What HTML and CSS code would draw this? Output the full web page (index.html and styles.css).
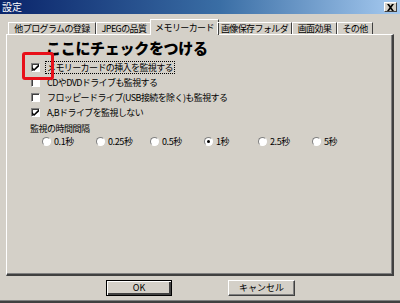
FILE: index.html
```html
<!DOCTYPE html>
<html lang="ja">
<head>
<meta charset="utf-8">
<title>設定</title>
<link rel="stylesheet" href="styles.css">
</head>
<body>
<div class="window">
  <div class="titlebar">
    <span class="title">設定</span>
    <span class="close"><svg width="9" height="7" viewBox="0 0 9 7"><path d="M1 0h2l1.5 2 1.5-2h2L5.5 3.5 8 7H6L4.5 5 3 7H1l2.5-3.5z" fill="#000"/></svg></span>
  </div>
  <div class="tabs">
    <div class="tab w1">他プログラムの登録</div>
    <div class="tab w2">JPEGの品質</div>
    <div class="tab active w3">メモリーカード</div>
    <div class="tab w4">画像保存フォルダ</div>
    <div class="tab w5">画面効果</div>
    <div class="tab w6">その他</div>
  </div>
  <div class="panel">
    <div class="checks">
      <div class="row"><span class="cb"><svg width="7" height="7" viewBox="0 0 7 7"><path d="M0 3l2 2 5-5v2.5L2 7 0 5z" fill="#000"/></svg></span><span class="lbl focus">メモリーカードの挿入を監視する</span></div>
      <div class="row"><span class="cb"></span><span class="lbl">CDやDVDドライブも監視する</span></div>
      <div class="row"><span class="cb"></span><span class="lbl">フロッピードライブ(USB接続を除く)も監視する</span></div>
      <div class="row"><span class="cb"><svg width="7" height="7" viewBox="0 0 7 7"><path d="M0 3l2 2 5-5v2.5L2 7 0 5z" fill="#000"/></svg></span><span class="lbl">A,Bドライブを監視しない</span></div>
    </div>
    <div class="group-label">監視の時間間隔</div>
    <div class="radios">
      <div class="radio"><span class="rb"></span><span>0.1秒</span></div>
      <div class="radio"><span class="rb"></span><span>0.25秒</span></div>
      <div class="radio"><span class="rb"></span><span>0.5秒</span></div>
      <div class="radio"><span class="rb on"></span><span>1秒</span></div>
      <div class="radio"><span class="rb"></span><span>2.5秒</span></div>
      <div class="radio"><span class="rb"></span><span>5秒</span></div>
    </div>
    <div class="note">ここにチェックをつける</div>
    <div class="redbox"></div>
  </div>
  <div class="buttons">
    <button class="btn default">OK</button>
    <button class="btn">キャンセル</button>
  </div>
</div>
</body>
</html>
```
FILE: styles.css
```css
html, body {
  margin: 0;
  padding: 0;
}
body {
  width: 400px;
  height: 303px;
  overflow: hidden;
  font-family: "Noto Sans CJK JP", "Liberation Sans", sans-serif;
  font-size: 9px;
  color: #000;
}
.window {
  width: 400px;
  height: 303px;
  box-sizing: border-box;
  background: #d4d0c8;
  display: flex;
  flex-direction: column;
  border-bottom: 2px solid #404040;
  box-shadow: inset 0 -1px 0 #808080;
}
.titlebar {
  height: 14px;
  flex: none;
  background: linear-gradient(to right, #0a246a, #3a6ea5 55%, #a6caf0);
  display: flex;
  align-items: center;
  justify-content: space-between;
  padding: 0 3px 0 2px;
}
.title {
  color: #fff;
  font-size: 10px;
  line-height: 12px;
}
.close {
  width: 13px;
  height: 10px;
  box-sizing: border-box;
  background: #d4d0c8;
  border: 1px solid;
  border-color: #fff #404040 #404040 #fff;
  display: flex;
  align-items: center;
  justify-content: center;
}
.tabs {
  height: 20px;
  flex: none;
  display: flex;
  align-items: flex-end;
  padding-left: 8px;
  position: relative;
  z-index: 1;
}
.tab {
  height: 12px;
  box-sizing: border-box;
  border-top: 1px solid #fff;
  border-left: 1px solid #fff;
  border-right: 1px solid #404040;
  text-align: center;
  line-height: 11px;
  white-space: nowrap;
  letter-spacing: -0.6px;
}
.tab.active {
  height: 16px;
  margin: 0 -2px -1px -2px;
  padding-top: 2px;
  background: #d4d0c8;
}
.w1 { width: 88px; }
.w2 { width: 56px; }
.w3 { width: 69px; }
.w4 { width: 75px; }
.w5 { width: 45px; }
.w6 { width: 36px; }
.panel {
  flex: none;
  height: 242px;
  margin: 0 6px;
  box-sizing: border-box;
  border-top: 1px solid #fff;
  border-left: 1px solid #fff;
  border-right: 2px solid #404040;
  border-bottom: 2px solid #404040;
  box-shadow: inset -1px -1px 0 #808080;
  position: relative;
  padding: 25px 0 0 24px;
}
.checks {
  display: flex;
  flex-direction: column;
}
.row {
  height: 15px;
  display: flex;
  align-items: center;
  gap: 3px;
}
.cb {
  width: 9px;
  height: 9px;
  box-sizing: border-box;
  background: #fff;
  border: 1px solid;
  border-color: #808080 #fff #fff #808080;
  box-shadow: inset 1px 1px 0 #404040;
  display: flex;
  align-items: center;
  justify-content: center;
  margin-right: 2px;
}
.lbl {
  line-height: 11px;
  padding: 0 1px;
  letter-spacing: -0.6px;
  white-space: nowrap;
  border: 1px dotted transparent;
}
.lbl.focus {
  border-color: #000;
}
.group-label {
  margin: 4px 0 0 -1px;
  height: 10px;
  line-height: 10px;
  letter-spacing: -0.5px;
}
.radios {
  display: flex;
  margin: 2px 0 0 11px;
  height: 11px;
  align-items: center;
}
.radio {
  width: 54px;
  display: flex;
  align-items: center;
  gap: 3px;
  letter-spacing: -0.4px;
  line-height: 11px;
}
.rb {
  width: 9px;
  height: 9px;
  box-sizing: border-box;
  border-radius: 50%;
  background: #fff;
  border: 1px solid;
  border-color: #808080 #fff #fff #808080;
  position: relative;
}
.rb.on::after {
  content: "";
  position: absolute;
  left: 2px;
  top: 2px;
  width: 3px;
  height: 3px;
  border-radius: 50%;
  background: #000;
}
.note {
  position: absolute;
  left: 39px;
  top: 3px;
  font-size: 15px;
  font-weight: 900;
  letter-spacing: -0.3px;
  line-height: 20px;
  white-space: nowrap;
}
.redbox {
  position: absolute;
  left: 15px;
  top: 17px;
  width: 32px;
  height: 28px;
  box-sizing: border-box;
  border: 3px solid #e8101a;
  border-radius: 3px;
}
.buttons {
  flex: 1;
  display: flex;
  align-items: flex-start;
  padding: 4px 0 0 106px;
  gap: 56px;
}
.btn {
  width: 66px;
  height: 16px;
  box-sizing: border-box;
  margin: 0;
  padding: 0;
  font: inherit;
  font-size: 9px;
  line-height: 12px;
  background: #d4d0c8;
  border: 1px solid;
  border-color: #fff #404040 #404040 #fff;
  box-shadow: inset -1px -1px 0 #808080;
  color: #000;
}
.btn.default {
  border: 1px solid #000;
  box-shadow: inset 1px 1px 0 #fff, inset -2px -2px 0 #404040;
}
.btn + .btn {
  width: 67px;
}
```
